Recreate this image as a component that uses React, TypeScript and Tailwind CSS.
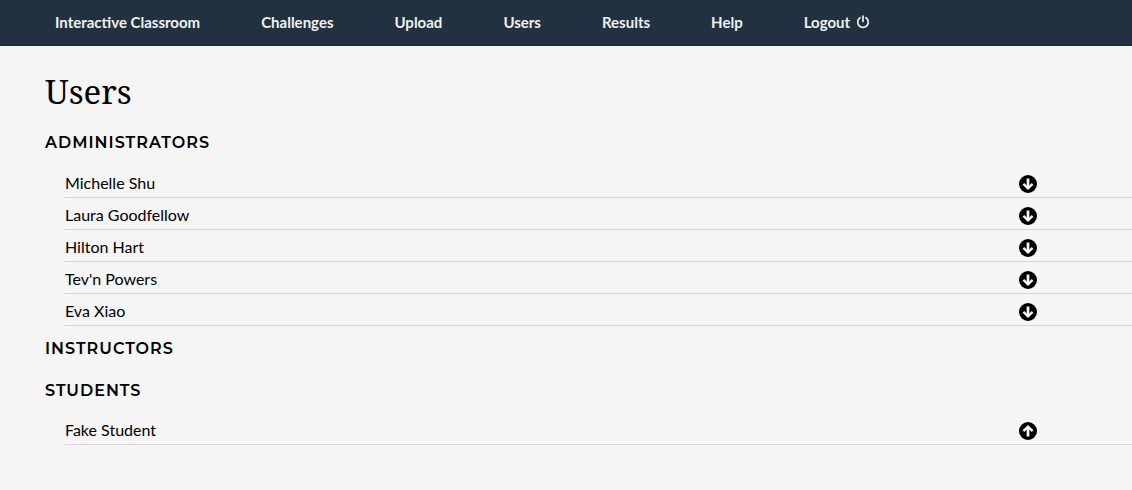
const navItems = ["Interactive Classroom", "Challenges", "Upload", "Users", "Results", "Help"];

const administrators = ["Michelle Shu", "Laura Goodfellow", "Hilton Hart", "Tev'n Powers", "Eva Xiao"];
const students = ["Fake Student"];

function PowerIcon() {
  return (
    <svg viewBox="0 0 14 14" className="size-3.5" fill="none" stroke="currentColor" strokeLinecap="round" aria-hidden="true">
      <path d="M4.1 2.7a5.3 5.3 0 1 0 5.8 0" strokeWidth="1.7" />
      <path d="M7 1.2v5.3" strokeWidth="1.7" />
    </svg>
  );
}

function ArrowIcon({ up }: { up?: boolean }) {
  return (
    <svg viewBox="0 0 18 18" className={up ? "size-[18px] rotate-180" : "size-[18px]"} aria-hidden="true">
      <circle cx="9" cy="9" r="9" fill="#000" />
      <path d="M9 3.5v9" fill="none" stroke="#f5f5f5" strokeWidth="2.8" />
      <path d="M4.4 8.9 9 13.3l4.6-4.4" fill="none" stroke="#f5f5f5" strokeWidth="2.4" />
    </svg>
  );
}

function UserList({ names, promote }: { names: string[]; promote?: boolean }) {
  return (
    <ul className="pl-5">
      {names.map((name) => (
        <li key={name} className="flex h-8 items-center justify-between border-b border-[#d6d6d6] pt-0.5 pr-[95px]">
          <span>{name}</span>
          <button type="button" className="pt-0.5" aria-label={(promote ? "Promote " : "Demote ") + name}>
            <ArrowIcon up={promote} />
          </button>
        </li>
      ))}
    </ul>
  );
}

function SectionTitle({ children }: { children: string }) {
  return (
    <h2 className="font-['Montserrat','Inter',sans-serif] text-base leading-6 font-semibold tracking-[1px] uppercase">
      {children}
    </h2>
  );
}

export default function App() {
  return (
    <div className="min-h-screen bg-[#f5f5f5] font-['Lato',sans-serif] text-base text-black">
      <nav className="flex h-[46px] items-center gap-[61px] border-b-2 border-[#202d3b] bg-[#223140] pl-[55px] text-[15px] font-bold text-[#f0f0f0]">
        {navItems.map((item) => (
          <a key={item} href="#">
            {item}
          </a>
        ))}
        <a href="#" className="flex items-center gap-1.5">
          Logout
          <PowerIcon />
        </a>
      </nav>
      <main className="pt-6 pl-[45px]">
        <h1 className="font-['Noto_Serif','DejaVu_Serif',serif] text-[33px] leading-11">Users</h1>
        <section className="pt-[17px]">
          <SectionTitle>Administrators</SectionTitle>
          <div className="pt-[11px]">
            <UserList names={administrators} />
          </div>
        </section>
        <section className="pt-[11px]">
          <SectionTitle>Instructors</SectionTitle>
        </section>
        <section className="pt-[18px]">
          <SectionTitle>Students</SectionTitle>
          <div className="pt-[10px]">
            <UserList names={students} promote />
          </div>
        </section>
      </main>
    </div>
  );
}
